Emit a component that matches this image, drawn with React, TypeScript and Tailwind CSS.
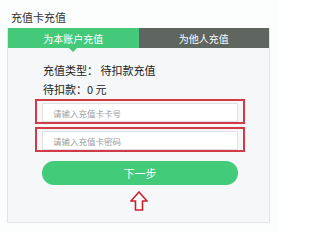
import { useState } from 'react';

const font = { fontFamily: '"Noto Sans CJK SC", "Noto Sans", sans-serif' };

function RedBox({ placeholder }: { placeholder: string }) {
  return (
    <div className="ml-[27px] w-[210px] h-[25px] border-2 border-[#d23a45] pl-[5px] pt-[2px]">
      <input
        placeholder={placeholder}
        className="block w-[196px] h-[19px] bg-white border border-[#dfe2e6] pl-[10px] text-[8.5px] text-[#333] placeholder:text-[#9a9ea3] outline-none"
        style={font}
      />
    </div>
  );
}

export default function App() {
  const [tab, setTab] = useState(0);

  return (
    <div className="w-[279px] h-[233px] bg-[#fcfdfd] pt-[8px]" style={font}>
      {/* Title */}
      <div className="pl-[11px] h-[20px] text-[11px] leading-[18px] text-[#333]">充值卡充值</div>

      {/* Card */}
      <div className="ml-[7px] w-[263px] h-[195px] border border-t-0 border-[#e3e6e9] bg-[#f5f7f8]">
        {/* Tabs */}
        <div className="grid grid-cols-2 h-[20px] text-[10px] text-white">
          <button
            onClick={() => setTab(0)}
            className={`relative flex items-center justify-center ${tab === 0 ? 'bg-[#44c97b]' : 'bg-[#5f655f]'}`}
          >
            为本账户充值
            {tab === 0 && (
              <span className="absolute left-1/2 -bottom-[4px] -translate-x-1/2 w-0 h-0 border-l-[4px] border-r-[4px] border-t-[4px] border-l-transparent border-r-transparent border-t-[#44c97b]" />
            )}
          </button>
          <button
            onClick={() => setTab(1)}
            className={`relative flex items-center justify-center ${tab === 1 ? 'bg-[#44c97b]' : 'bg-[#5f655f]'}`}
          >
            为他人充值
            {tab === 1 && (
              <span className="absolute left-1/2 -bottom-[4px] -translate-x-1/2 w-0 h-0 border-l-[4px] border-r-[4px] border-t-[4px] border-l-transparent border-r-transparent border-t-[#44c97b]" />
            )}
          </button>
        </div>

        {/* Body */}
        <div className="flex flex-col pt-[12px]">
          <div className="pl-[35px] h-[20px] leading-[20px] text-[11px] text-[#222]">充值类型： 待扣款充值</div>
          <div className="pl-[35px] h-[19px] leading-[19px] text-[11px] text-[#222]">待扣款：0 元</div>
          <div className="flex flex-col gap-[3px]">
            <RedBox placeholder="请输入充值卡卡号" />
            <RedBox placeholder="请输入充值卡密码" />
          </div>
          <button className="mt-[9px] ml-[34px] w-[196px] h-[24px] rounded-full bg-[#42cb78] text-white text-[11px]">
            下一步
          </button>
          <div className="flex justify-center mt-[6px] w-[263px] pr-[1px]">
            <svg width="18" height="20" viewBox="0 0 18 20">
              <path
                d="M9 1 L17 10 L12.5 10 L12.5 19 L5.5 19 L5.5 10 L1 10 Z"
                fill="white"
                stroke="#c8202e"
                strokeWidth="1.6"
                strokeLinejoin="miter"
              />
            </svg>
          </div>
        </div>
      </div>
    </div>
  );
}
